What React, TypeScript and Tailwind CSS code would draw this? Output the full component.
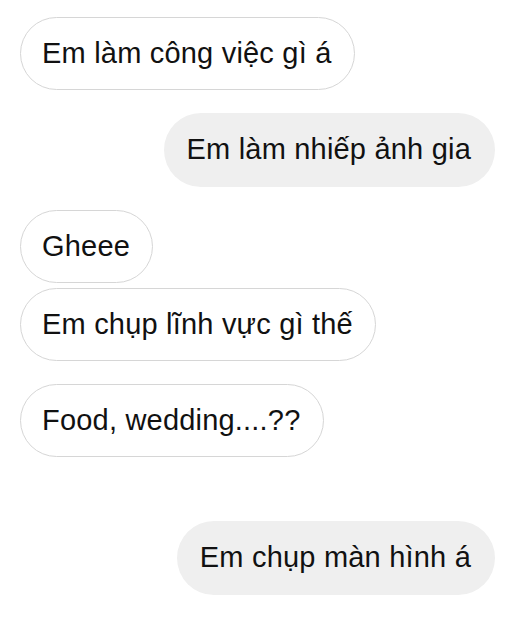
import React from "react";

function Left({ text, className = "" }: { text: string; className?: string }) {
  return (
    <div
      className={
        "self-start h-[73px] flex items-center rounded-full border border-[#d6d6d6] bg-white pl-[21px] pr-[22px] text-[29px] tracking-[0.2px] text-[#111111] whitespace-nowrap " +
        className
      }
    >
      {text}
    </div>
  );
}

function Right({ text, className = "" }: { text: string; className?: string }) {
  return (
    <div
      className={
        "self-end h-[74px] flex items-center rounded-full bg-[#efefef] pl-[23px] pr-[24px] text-[29px] tracking-[0.2px] text-[#111111] whitespace-nowrap " +
        className
      }
    >
      {text}
    </div>
  );
}

export default function App() {
  return (
    <div
      className="w-[509px] h-[640px] bg-white flex flex-col pt-[17px] pl-[20px] pr-[14px] overflow-hidden"
      style={{ fontFamily: '"Liberation Sans", Arial, sans-serif' }}
    >
      <Left text="Em làm công việc gì á" />
      <Right text="Em làm nhiếp ảnh gia" className="mt-[23px]" />
      <Left text="Gheee" className="mt-[23px]" />
      <Left text="Em chụp lĩnh vực gì thế" className="mt-[5px]" />
      <Left text="Food, wedding....??" className="mt-[23px]" />
      <Right text="Em chụp màn hình á" className="mt-[64px]" />
    </div>
  );
}
